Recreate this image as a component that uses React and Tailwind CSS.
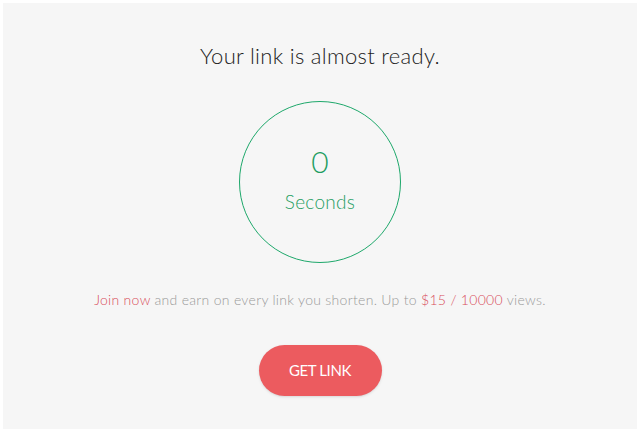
import React from "react";

const App = () => {
  return (
    <div className="w-[640px] h-[432px] bg-white p-[3px] font-['Lato',sans-serif]">
      <div className="h-full bg-[#f6f6f6] flex flex-col items-center">
        <h1 className="mt-[39px] text-[22px] leading-[28px] font-light tracking-[0.3px] text-[#222]">
          Your link is almost ready.
        </h1>

        <div className="mt-[31px] w-[162px] h-[162px] rounded-full border-[1.5px] border-[#1ea86b] flex flex-col items-center justify-center text-[#1f9d62]">
          <span className="text-[30px] leading-[34px] font-light mt-[-6px]">0</span>
          <span className="text-[19px] leading-[24px] font-light mt-[12px] tracking-[0.3px]">Seconds</span>
        </div>

        <p className="mt-[28px] text-[14px] leading-[18px] font-light tracking-[0.3px] text-[#9a9a9a]">
          <span className="text-[#d94f5c]">Join now</span> and earn on every link you shorten. Up to{" "}
          <span className="text-[#d94f5c]">$15 / 10000</span> views.
        </p>

        <button className="mt-[36px] w-[123px] h-[51px] rounded-full bg-[#ec5b5f] text-white text-[15px] tracking-tight shadow-sm">
          GET LINK
        </button>
      </div>
    </div>
  );
};

export default App;
